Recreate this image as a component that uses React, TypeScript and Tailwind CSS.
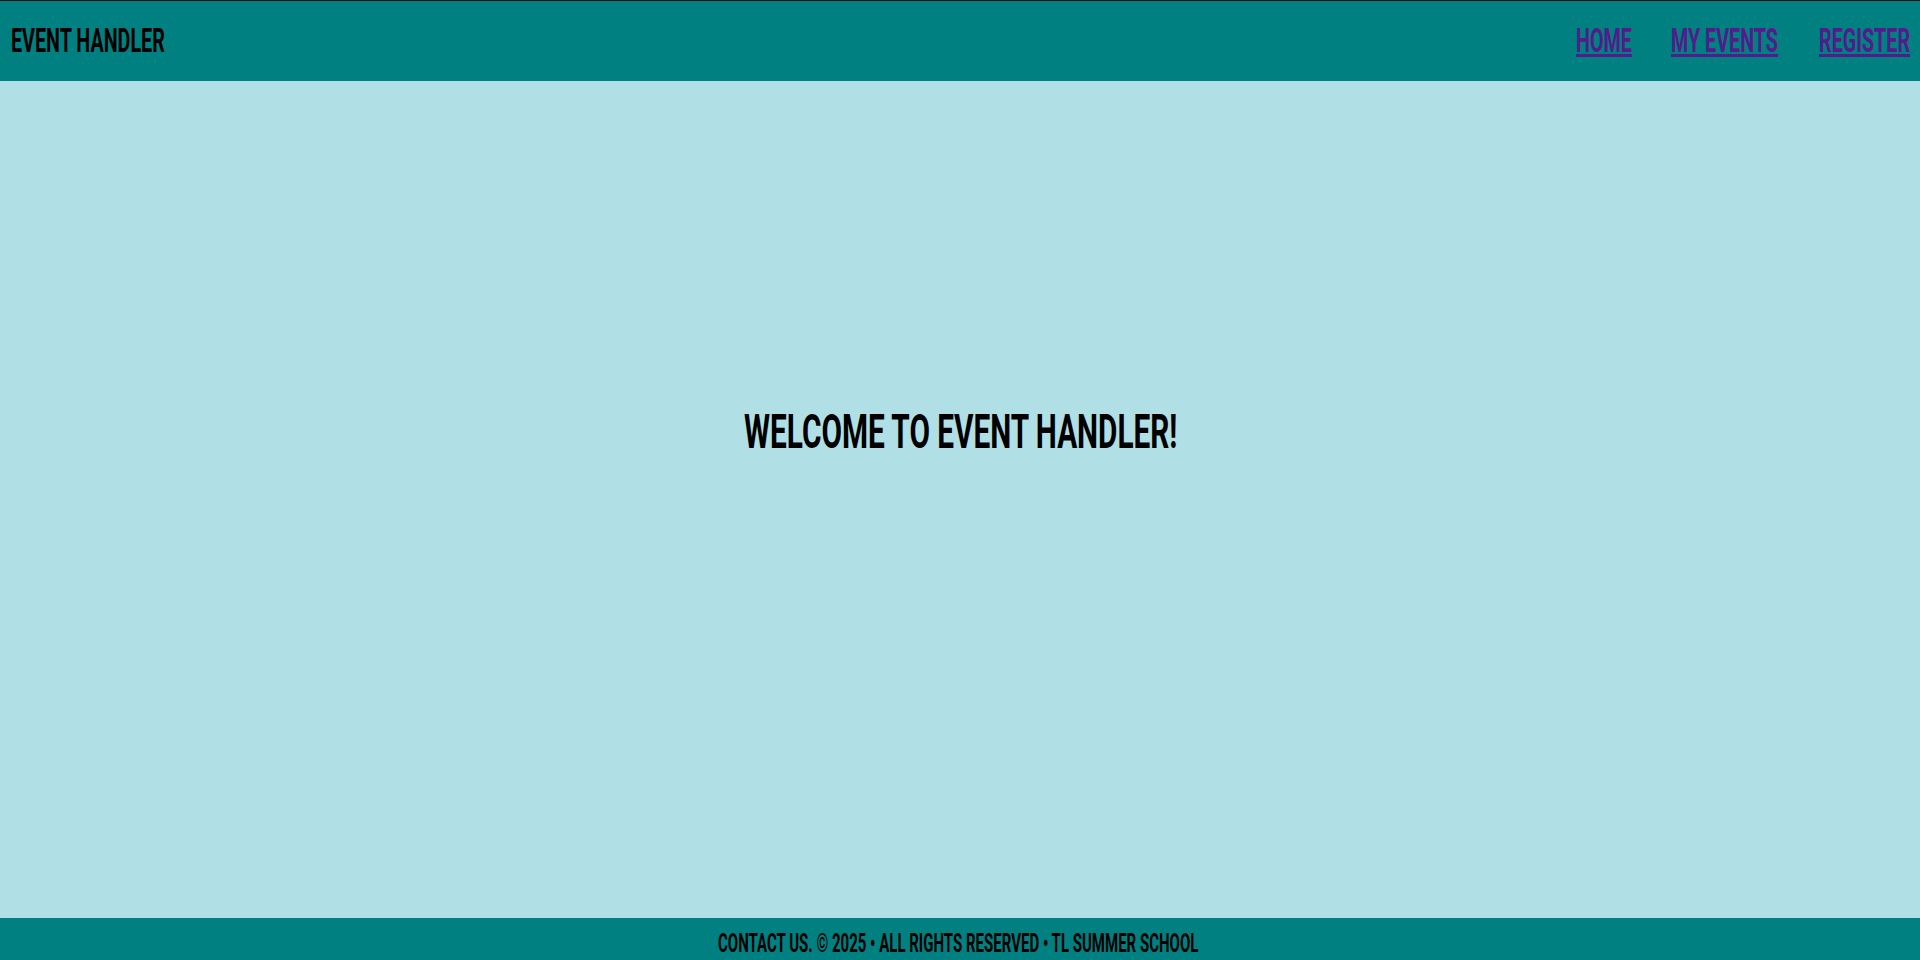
import React from "react";

export default function App() {
  return (
    <div className="flex h-[960px] w-full flex-col bg-[#b0e0e6] font-['Roboto',sans-serif] font-bold uppercase text-black">
      <header className="flex h-[81px] items-center justify-between border-t border-[#111] bg-[#008080] pl-[11px] pr-[10px]">
        <div className="w-[153px] whitespace-nowrap">
          <span className="inline-block origin-left scale-x-[0.58] text-[34px] leading-none">Event Handler</span>
        </div>
        <nav className="flex items-center gap-10">
          <a href="#" className="block w-[55px] whitespace-nowrap text-[#551a8b]">
            <span className="inline-block origin-left scale-x-[0.58] text-[34px] leading-none underline decoration-[3px] underline-offset-[2px]">Home</span>
          </a>
          <a href="#" className="block w-[108px] whitespace-nowrap text-[#551a8b]">
            <span className="inline-block origin-left scale-x-[0.58] text-[34px] leading-none underline decoration-[3px] underline-offset-[2px]">My Events</span>
          </a>
          <a href="#" className="block w-[91px] whitespace-nowrap text-[#551a8b]">
            <span className="inline-block origin-left scale-x-[0.58] text-[34px] leading-none underline decoration-[3px] underline-offset-[2px]">Register</span>
          </a>
        </nav>
      </header>
      <main className="flex flex-1 items-center justify-center pb-[136px]">
        <h1 className="w-[433px] whitespace-nowrap">
          <span className="inline-block origin-left scale-x-[0.62] text-[48px] leading-none">Welcome to Event Handler!</span>
        </h1>
      </main>
      <footer className="flex h-[42px] items-center justify-center bg-[#008080] pt-[12px]">
        <div className="w-[485px] whitespace-nowrap">
          <span className="inline-block origin-left scale-x-[0.6] text-[25px] leading-none">Contact Us. © 2025 • All Rights Reserved • TL Summer School</span>
        </div>
      </footer>
    </div>
  );
}
